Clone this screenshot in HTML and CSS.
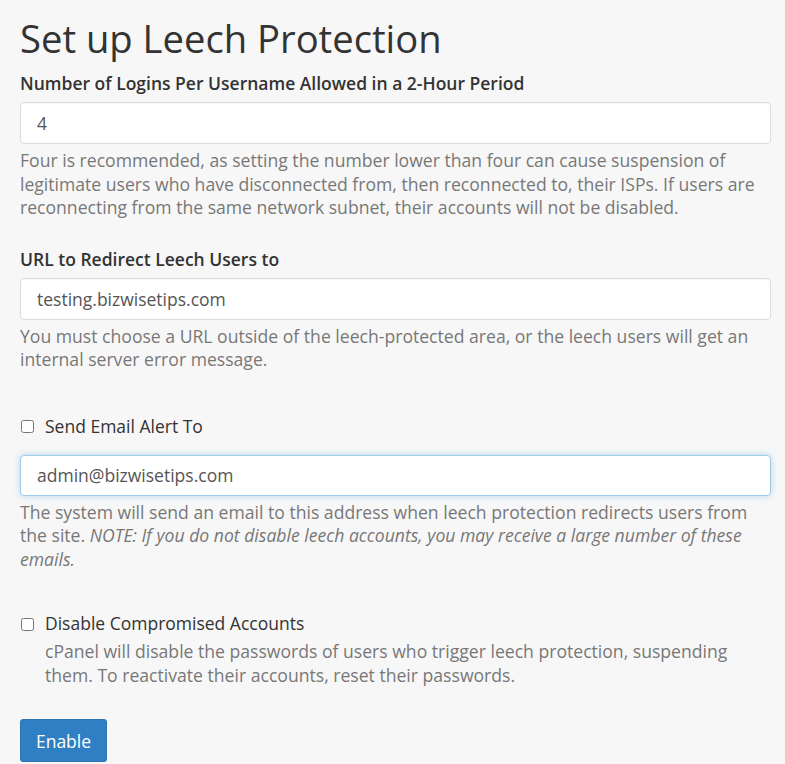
FILE: index.html
```html
<!DOCTYPE html>
<html lang="en">
<head>
<meta charset="utf-8">
<title>Set up Leech Protection</title>
<link rel="stylesheet" href="styles.css">
</head>
<body>
<main class="page">
  <h1 class="title">Set up Leech Protection</h1>

  <div class="group">
    <label class="label" for="logins">Number of Logins Per Username Allowed in a 2-Hour Period</label>
    <input class="input" id="logins" type="text" value="4">
    <p class="help">Four is recommended, as setting the number lower than four can cause suspension of legitimate users who have disconnected from, then reconnected to, their ISPs. If users are reconnecting from the same network subnet, their accounts will not be disabled.</p>
  </div>

  <div class="group group-url">
    <label class="label" for="url">URL to Redirect Leech Users to</label>
    <input class="input" id="url" type="text" value="testing.bizwisetips.com">
    <p class="help">You must choose a URL outside of the leech-protected area, or the leech users will get an internal server error message.</p>
  </div>

  <div class="group group-email">
    <label class="check"><input type="checkbox" class="box"><span>Send Email Alert To</span></label>
    <input class="input input-focus" type="text" value="admin@bizwisetips.com">
    <p class="help">The system will send an email to this address when leech protection redirects users from the site. <em>NOTE: If you do not disable leech accounts, you may receive a large number of these emails.</em></p>
  </div>

  <div class="group group-disable">
    <label class="check"><input type="checkbox" class="box"><span>Disable Compromised Accounts</span></label>
    <p class="help help-indent">cPanel will disable the passwords of users who trigger leech protection, suspending them. To reactivate their accounts, reset their passwords.</p>
  </div>

  <button class="btn" type="button">Enable</button>
</main>
</body>
</html>
```

FILE: styles.css
```css
* { box-sizing: border-box; }

html, body {
  margin: 0;
  padding: 0;
  background: #f7f7f7;
}

body {
  font-family: "Open Sans", "Liberation Sans", sans-serif;
  color: #333;
  overflow: hidden;
}

.page {
  padding: 18px 14px 0 20px;
}

.title {
  margin: 0;
  font-size: 38.2px;
  line-height: 41px;
  font-weight: 400;
  color: #333;
}

.group {
  display: flex;
  flex-direction: column;
  align-items: stretch;
}

.label {
  margin-top: 12px;
  font-size: 17.5px;
  line-height: 24px;
  font-weight: 600;
  color: #333;
}

.input {
  margin-top: 7px;
  height: 42px;
  width: 100%;
  padding: 0 16px;
  border: 1px solid #dcdcdc;
  border-radius: 4px;
  background: #fff;
  font-family: inherit;
  font-size: 17.5px;
  color: #555;
  box-shadow: inset 0 1px 1px rgba(0, 0, 0, 0.04);
  outline: none;
}

.input-focus {
  height: 41px;
  border-color: #9fcbec;
  box-shadow: 0 0 6px rgba(102, 175, 233, 0.45);
}

.help {
  margin: 5px 0 0;
  font-size: 17.6px;
  line-height: 23.5px;
  color: #777;
}

.help em { font-style: italic; }

.group-url .label { margin-top: 27px; }

.check {
  display: flex;
  align-items: center;
  font-size: 17.5px;
  line-height: 24px;
  color: #333;
}

.box {
  margin: 2px 11px 0 1px;
  width: 13px;
  height: 13px;
}

.group-email .check { margin-top: 42px; }
.group-email .input { margin-top: 17px; }
.group-email .help { margin-top: 5px; }

.group-disable .check { margin-top: 40px; }

.help-indent {
  margin-top: 5px;
  padding-left: 25px;
}

.btn {
  margin-top: 32px;
  width: 87px;
  height: 43px;
  border: 1px solid #2a74b5;
  border-radius: 3px;
  background: #2f7fc4;
  color: #fff;
  font-family: inherit;
  font-size: 17.5px;
  padding: 0;
}
```
